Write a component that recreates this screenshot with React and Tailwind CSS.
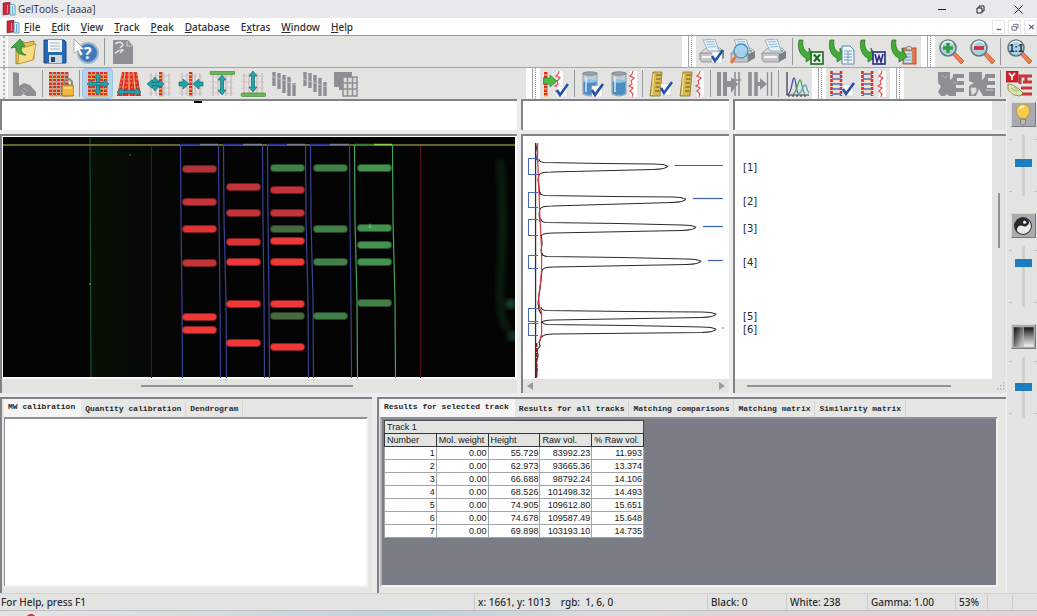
import React from "react";

const RED = "#e22b2b";
const TEAL = "#22a5a8";
const GRAY = "#8d8f94";

/* ---------- shared icon parts ---------- */

function Svg({ children, size = 26 }) {
  return (
    <svg width={size} height={size} viewBox="0 0 26 26" aria-hidden="true">
      {children}
    </svg>
  );
}

function Lattice({ x = 3, y = 1, cols = 5, rows = 7, step = 4 }) {
  const cells = [];
  for (let c = 0; c < cols; c++) {
    cells.push(
      <rect key={"g" + c} x={x + c * step + 3} y={y} width="1" height={rows * 3.5} fill="#b8a79c" />
    );
    for (let r = 0; r < rows; r++) {
      cells.push(
        <rect key={c + "-" + r} x={x + c * step} y={y + r * 3.5} width="3" height="2.5" fill={RED} />,
        <rect key={c + "y" + r} x={x + c * step} y={y + r * 3.5 + 2.5} width="3" height="1" fill="#f3b03c" />
      );
    }
  }
  return <g>{cells}</g>;
}

function FadedLanes() {
  return (
    <g>
      <path d="M4 2v23M9 2v23M17 2v23M22 2v23" stroke="#b3b4b8" strokeWidth="1" />
      <path d="M1 5h23M1 11h23M1 17h23M1 22h23" stroke="#eeb4b6" strokeWidth=".8" />
    </g>
  );
}

function Check({ x = 12, y = 12 }) {
  return (
    <g>
      <rect x={x + 1} y={y + 2} width="10" height="11" fill="#fff" stroke="#c9ccd2" strokeWidth=".7" />
      <path d={`M${x + 1} ${y + 6}l3 5 8-11`} stroke="#2450a8" strokeWidth="2.6" fill="none" />
    </g>
  );
}

function RedTrace({ x = 19 }) {
  return (
    <g>
      <rect x={x} y="0" width="7" height="26" fill="#fff" />
      <path
        d={`M${x + 3} 0l-1 3-2 2 4 2-3 3 1 3-3 2 4 2-3 3 3 3-1 3`}
        stroke="#e84a50"
        strokeWidth="1.2"
        fill="none"
      />
    </g>
  );
}

function Printer({ children }) {
  return (
    <Svg>
      <path d="M1 14l6-5h14l4 4-7 5H2z" fill="#d9dbdc" stroke="#8b8f94" strokeWidth=".7" />
      <path d="M4 1l12-1 4 12H9z" fill="#e6f0f8" stroke="#8aa2b8" strokeWidth=".8" />
      <path d="M7 3l8-.5M8 5.500l8-.5M9 8l8-.5" stroke="#86b4d8" strokeWidth=".9" />
      <path d="M1 14h17v9H3l-2-2z" fill="#c4c6c9" stroke="#7b7f84" strokeWidth=".7" />
      <path d="M18 15l7-3v7l-7 4z" fill="#7d8186" />
      <path d="M3 18h13" stroke="#f6f6f6" strokeWidth="2" />
      <circle cx="21" cy="12" r="1" fill="#4bb94b" />
      {children}
    </Svg>
  );
}

function GreenArrow() {
  return (
    <path
      d="M1 1h4c-1 7 1 11 6 13V9l5 9-8 5v-4C2 17-1 9 1 1z"
      fill="#43ab38"
      stroke="#23711f"
      strokeWidth=".7"
    />
  );
}

function Lens({ children }) {
  return (
    <Svg>
      <path d="M14 15l3-2 9 9-3 3z" fill="#f08050" stroke="#b1502b" strokeWidth=".7" />
      <circle cx="10" cy="9" r="8" fill="#a9d3df" stroke="#66777f" strokeWidth="1.6" />
      <path d="M4 8a6 6 0 0 1 11-3" stroke="#e3f5f8" strokeWidth="1.6" fill="none" />
      {children}
    </Svg>
  );
}

function ArrowH({ y = 13, x1 = 1, x2 = 25 }) {
  return (
    <path
      d={`M${x1} ${y}l5-4v2.500H${x2 - 5}V${y - 4}l5 4-5 4v-2.500H${x1 + 5}v2.500z`}
      fill={TEAL}
      stroke="#126c72"
      strokeWidth=".7"
    />
  );
}

function ArrowV({ y1 = 2, y2 = 24, x = 13 }) {
  return (
    <path
      d={`M${x} ${y1}l4 5h-2.500V${y2 - 5}h2.500l-4 5-4-5h2.500V${y1 + 5}h-2.500z`}
      fill={TEAL}
      stroke="#126c72"
      strokeWidth=".7"
    />
  );
}

function Beaker() {
  return (
    <g>
      <path d="M3 2h14v21q-7 4-14 0z" fill="#c3ccd3" stroke="#8a959f" strokeWidth=".9" />
      <path d="M3.500 10h13v12.500q-6.500 3-13 0z" fill="#4c8ec4" />
      <ellipse cx="10" cy="10" rx="6.500" ry="1.800" fill="#8fc3e4" />
      <ellipse cx="10" cy="2.500" rx="7" ry="1.800" fill="#97a2aa" stroke="#66727d" strokeWidth=".6" />
      <path d="M6 6v15" stroke="#e9f5fc" strokeWidth="1.300" />
    </g>
  );
}

function GoldRuler() {
  return (
    <g>
      <path d="M4 1h9l-2 24H1z" fill="#d8ba55" stroke="#8a6d19" strokeWidth=".8" />
      <path d="M7 4h5M7 8h4.500M6.500 12h4.500M6.500 16h4.500M6 20h4.500" stroke="#6d5312" strokeWidth="1.100" />
      <path d="M4.500 3L3 24" stroke="#f4e192" strokeWidth="1.200" />
    </g>
  );
}

function BlueLadder() {
  return (
    <g>
      <rect x="1" y="0" width="12" height="25" fill="#f6dccb" />
      <path d="M2.500 0v25M12 0v25" stroke={RED} strokeWidth="2.600" strokeDasharray="3 1" />
      <path d="M3 3h9M3 8h9M3 13h9M3 18h9M3 23h9" stroke="#4573b8" strokeWidth="1.600" />
    </g>
  );
}

/* ---------- toolbar icons ---------- */

const icons = {
  app: (
    <svg width="14" height="14" viewBox="0 0 14 14" aria-hidden="true">
      <path d="M1 1l7-1v12l-7 1z" fill="#c9283c" stroke="#7d2230" strokeWidth=".6" />
      <path d="M5.500 3v8" stroke="#ef8f98" strokeWidth="1" />
      <path d="M8 2l5 1v10H8z" fill="#e8f4fa" stroke="#4f97bd" strokeWidth=".9" />
      <path d="M10.500 4v8" stroke="#67b4d8" strokeWidth="1.400" />
    </svg>
  ),
  open: (
    <Svg>
      <path d="M5 6l6-4 3 2 9-2v18L5 25z" fill="#e5c35a" stroke="#9f7d22" strokeWidth=".9" />
      <path d="M8 10l17-5-3 16-15 4z" fill="#f6dd7f" stroke="#ae8b2e" strokeWidth=".8" />
      <path d="M0 9L9 0l5 7-4 1c0 5 2 7 5 8-7 0-10-3-10-8z" fill="#45a847" stroke="#257a2b" strokeWidth=".8" />
    </Svg>
  ),
  save: (
    <Svg>
      <path d="M2 1h20l2 2v21H2z" fill="#2869b4" stroke="#174681" strokeWidth="1" />
      <rect x="6" y="1" width="14" height="12" fill="#f1f5f9" />
      <path d="M8 4h10M8 7h10M8 10h10" stroke="#a9b7c7" strokeWidth="1" />
      <rect x="7" y="16" width="13" height="8" fill="#cfd7df" />
      <rect x="9" y="18" width="4" height="5" fill="#2d4564" />
    </Svg>
  ),
  help: (
    <Svg>
      <circle cx="15" cy="14" r="10" fill="#3c79bd" stroke="#9fb6cb" strokeWidth="2" />
      <text x="11" y="20" fontSize="16" fontWeight="700" fill="#fff" className="font-['Open_Sans']">
        ?
      </text>
      <path d="M1 0l10 10-4 .5 3 5-3 1-2-5-4 3z" fill="#fff" stroke="#8c97a2" strokeWidth=".7" />
    </Svg>
  ),
  report: (
    <Svg>
      <path d="M3 1h15l5 6v18H3z" fill={GRAY} />
      <path d="M17 2v5h5" stroke="#d6d7d9" fill="none" />
      <path d="M5 5c4-3 7-2 8 1l-3 3M5 14c3-1 4-4 8-3l-3 3" stroke="#e6e7e8" strokeWidth="1.400" fill="none" />
    </Svg>
  ),
  grayShape: (
    <Svg>
      <path d="M2 1l6 1v13l5-3 6 2 6 7v4h-9l-4-2-2 2H2z" fill={GRAY} />
      <path d="M12 17l5 3M10 20l4 2" stroke="#b9babd" strokeWidth=".8" />
    </Svg>
  ),
  lock: (
    <Svg>
      <Lattice x={1} />
      <path d="M16 15v-3a4 4 0 0 1 8 0v3" stroke="#8c8c84" strokeWidth="2" fill="none" />
      <rect x="14" y="14" width="12" height="11" rx="1.500" fill="#eeb83c" stroke="#9f741c" />
      <path d="M16 17h8" stroke="#fbe59b" strokeWidth="1.500" />
    </Svg>
  ),
  move: (
    <Svg>
      <Lattice x={3} />
      <ArrowV y1={2} y2={24} />
      <ArrowH x1={2} x2={24} />
    </Svg>
  ),
  widen: (
    <Svg>
      <path d="M6 1h15l4 24H1z" fill={RED} />
      <path d="M9 1L6 25M13 1v24M17 1l3 24" stroke="#f0d2ad" strokeWidth="1" />
      <path d="M5 4h17M5 8h18M4 12h18M3 16h20" stroke="#f0a637" strokeWidth="1" strokeDasharray="2 1" />
      <ArrowH y={21} />
    </Svg>
  ),
  moveTrack: (
    <Svg>
      <FadedLanes />
      <Lattice x={12} cols={1} />
      <ArrowV x={8} y1={6} y2={20} />
      <ArrowH x1={0} x2={17} />
    </Svg>
  ),
  narrowTrack: (
    <Svg>
      <FadedLanes />
      <Lattice x={11} cols={1} />
      <path d="M1 11h4V8l6 5-6 5v-3H1zM25 11h-4V8l-6 5 6 5v-3h4z" fill={TEAL} stroke="#126c72" strokeWidth=".7" />
    </Svg>
  ),
  topEdge: (
    <Svg>
      <FadedLanes />
      <rect x="1" y="0" width="25" height="3.500" rx="1.500" fill="#66b852" stroke="#3c8431" strokeWidth=".6" />
      <ArrowV y1={4} y2={24} />
    </Svg>
  ),
  bottomEdge: (
    <Svg>
      <FadedLanes />
      <ArrowV y1={0} y2={21} />
      <rect x="1" y="22" width="25" height="3.500" rx="1.500" fill="#66b852" stroke="#3c8431" strokeWidth=".6" />
    </Svg>
  ),
  tracksA: (
    <Svg>
      <path d="M3 1v14M8 2v16M13 4v18M18 6v19M23 12v13" stroke={GRAY} strokeWidth="3.400" />
      <path d="M1 5l24 9" stroke="#c5c6c9" strokeWidth=".8" />
    </Svg>
  ),
  tracksB: (
    <Svg>
      <path d="M3 1v14M8 2v15M13 4v17M18 7v18M23 11v14" stroke={GRAY} strokeWidth="3.400" />
      <path d="M1 8l24 8" stroke="#c5c6c9" strokeWidth=".8" />
    </Svg>
  ),
  grid: (
    <Svg>
      <path d="M1 1h18v5h-7v13H6v-3H1z" fill={GRAY} />
      <rect x="10" y="6" width="14" height="19" fill="#deded9" stroke={GRAY} strokeWidth="1.500" />
      <path d="M14.500 6v19M19.500 6v19M10 12h14M10 18h14" stroke={GRAY} strokeWidth="1.500" />
    </Svg>
  ),
  printCheck: (
    <Printer>
      <Check x={12} y={11} />
    </Printer>
  ),
  preview: (
    <Printer>
      <circle cx="11" cy="12" r="7" fill="#9fd3ec" fillOpacity=".85" stroke="#4c8fb6" strokeWidth="1.300" />
      <path d="M6 17l-5 7" stroke="#e57544" strokeWidth="3" />
    </Printer>
  ),
  print: <Printer />,
  excel: (
    <Svg>
      <GreenArrow />
      <rect x="13" y="13" width="12" height="12" fill="#e4f1df" stroke="#1c6a2a" strokeWidth="1.600" />
      <path d="M16 15.500l6 7M22 15.500l-6 7" stroke="#1c6a2a" strokeWidth="2" />
    </Svg>
  ),
  sheet: (
    <Svg>
      <GreenArrow />
      <path d="M13 7h8l4 4v14H13z" fill="#f1f7fc" stroke="#5d83ae" strokeWidth="1" />
      <path d="M15 12h8M15 15h8M15 18h8M15 21h8M19 12v12" stroke="#6592c4" strokeWidth=".9" />
    </Svg>
  ),
  word: (
    <Svg>
      <GreenArrow />
      <rect x="13" y="13" width="12" height="12" fill="#e5e6f6" stroke="#2b2b82" strokeWidth="1.600" />
      <path d="M15 15l2 8 2-6 2 6 2-8" stroke="#2b2b82" strokeWidth="1.600" fill="none" />
    </Svg>
  ),
  clipboard: (
    <Svg>
      <rect x="12" y="9" width="13" height="16" fill="#ea7746" stroke="#ad4f2b" strokeWidth=".9" />
      <rect x="13" y="12" width="8" height="12" fill="#d5e2ee" stroke="#8094a6" strokeWidth=".6" />
      <path d="M14 15h6M14 18h6M14 21h6" stroke="#7a9bbe" />
      <path d="M15 11q0-4 3-4t3 4z" fill="#d5d7da" stroke="#6e7175" strokeWidth=".8" />
      <GreenArrow />
    </Svg>
  ),
  zoomIn: (
    <Lens>
      <path d="M10 4v10M5 9h10" stroke="#329f3c" strokeWidth="3.400" />
    </Lens>
  ),
  zoomOut: (
    <Lens>
      <path d="M5 9h10" stroke="#d22f3f" strokeWidth="3.800" />
    </Lens>
  ),
  zoomOne: (
    <Lens>
      <text x="3" y="13" fontSize="10" fontWeight="700" fill="#142f3d" className="font-['Liberation_Sans']">
        1:1
      </text>
    </Lens>
  ),
  detect: (
    <Svg>
      <Lattice x={1} cols={1} />
      <RedTrace x={13} />
      <path d="M0 7h7V4l7 6-7 6v-3H0z" fill="#4fbd45" stroke="#2a7f28" strokeWidth=".7" />
      <Check x={13} y={13} />
    </Svg>
  ),
  beakerCheck: (
    <Svg>
      <Beaker />
      <Check x={11} y={13} />
    </Svg>
  ),
  beakerTrace: (
    <Svg>
      <g transform="translate(-2 0)">
        <Beaker />
      </g>
      <RedTrace />
    </Svg>
  ),
  rulerCheck: (
    <Svg>
      <g transform="translate(1 0)">
        <GoldRuler />
      </g>
      <Check x={12} y={11} />
    </Svg>
  ),
  rulerTrace: (
    <Svg>
      <GoldRuler />
      <RedTrace x={18} />
    </Svg>
  ),
  matchA: (
    <Svg>
      <path d="M3 1v24M9 1v24" stroke={GRAY} strokeWidth="4" />
      <path d="M10 10h5V6l7 7-7 9v-6h-5z" fill={GRAY} />
      <path d="M19 1v24M23 1v24M16 9h9" stroke={GRAY} strokeWidth="1.600" fill="none" />
    </Svg>
  ),
  matchB: (
    <Svg>
      <path d="M3 1v24M9 1v24" stroke={GRAY} strokeWidth="3.600" />
      <path d="M9 11h4V7l7 6-7 6v-4H9z" fill={GRAY} />
      <path d="M20.500 1v24M24.500 1v24" stroke={GRAY} strokeWidth="1.300" />
    </Svg>
  ),
  chart: (
    <Svg>
      <path d="M3 1v23h22" stroke="#33373e" strokeWidth="1.200" fill="none" />
      <path d="M4 23c4-1 4-16 6-16s2 16 5 16" stroke="#454fb0" strokeWidth="1.300" fill="none" />
      <path d="M9 23c4-1 5-14 7-14s2 12 5 14" stroke="#4c9f50" strokeWidth="1.300" fill="none" />
      <path d="M14 23c5-1 4-9 7-9 2 0 2 7 4 8" stroke="#53a8bd" strokeWidth="1.300" fill="none" />
      <path d="M5 24v2M9 24v2M13 24v2M17 24v2M21 24v2" stroke="#33373e" />
    </Svg>
  ),
  ladderCheck: (
    <Svg>
      <BlueLadder />
      <Check x={13} y={12} />
    </Svg>
  ),
  ladderTrace: (
    <Svg>
      <BlueLadder />
      <RedTrace />
    </Svg>
  ),
  treeA: (
    <Svg>
      <path d="M0 1h12v8l3-3V3h11v4h-7v3h7v4h-8v3h8v4h-8v4h-7l-2-2-2 2H3l-3-4 3-6-3-3z" fill={GRAY} />
      <path d="M4 4l3 3 3-3M16 12h4" stroke="#b4b5b9" strokeWidth=".9" fill="none" />
    </Svg>
  ),
  treeB: (
    <Svg>
      <path d="M0 1h13v8l3-3V3h10v4h-7v3h7v4h-8v3h8v8H14l-4-7-3 7H0V15l5-3-5-2z" fill={GRAY} />
      <path d="M2 17h5v4l-4 3zM17 19h7" fill="#e3e3e3" stroke="#d3d4d6" strokeWidth=".9" />
    </Svg>
  ),
  treeRed: (
    <Svg>
      <path d="M14 13V5h12M17 11h9M15 17h11M13 23h13M20 5v6" stroke="#c9333b" strokeWidth="3" fill="none" />
      <rect x="0" y="0" width="12" height="11" fill="#d5222f" stroke="#86141f" strokeWidth=".7" />
      <path d="M3 2l3 3.500L9 2M6 5.500V9" stroke="#fff" strokeWidth="1.600" fill="none" />
      <path d="M2 13l5 1 6 4 4 4-3 3-6-1-6-5z" fill="#dce5ae" stroke="#798353" strokeWidth=".8" />
      <path d="M5 17l6 4M8 16l5 4" stroke="#8a965c" strokeWidth=".7" />
    </Svg>
  ),
  bulb: (
    <Svg size={22}>
      <path d="M9 17c0-3-4-4-4-9a8 8 0 0 1 16 0c0 5-4 6-4 9z" fill="#f7cc50" stroke="#b78c2a" strokeWidth=".9" />
      <path d="M9 6a4 4 0 0 1 5-3" stroke="#fff5c8" strokeWidth="2" fill="none" />
      <path d="M10 18h6v5l-3 2-3-2z" fill="#b9bcc2" stroke="#6d6f74" strokeWidth=".8" />
    </Svg>
  ),
  yin: (
    <Svg size={22}>
      <circle cx="13" cy="13" r="10" fill="#e9e9e9" stroke="#333" strokeWidth="1.200" />
      <path d="M13 3a10 10 0 0 0 0 20a5 5 0 0 1 0-10a5 5 0 0 0 0-10z" fill="#2a2a2a" transform="rotate(25 13 13)" />
      <circle cx="15" cy="8.500" r="1.800" fill="#e9e9e9" />
      <circle cx="11" cy="17.500" r="1.800" fill="#e9e9e9" />
      <circle cx="15" cy="8.500" r="1.600" fill="#e9e9e9" />
    </Svg>
  ),
  gamma: (
    <Svg size={24}>
      <defs>
        <linearGradient id="gammaA" x1="0" x2="1" y1="0" y2="1">
          <stop offset="0" stopColor="#0c0c0c" />
          <stop offset="1" stopColor="#dcdcdc" />
        </linearGradient>
        <linearGradient id="gammaB" x1="0" x2="0" y1="0" y2="1">
          <stop offset="0" stopColor="#151515" />
          <stop offset=".5" stopColor="#8c8c90" />
          <stop offset="1" stopColor="#f4f4f4" />
        </linearGradient>
      </defs>
      <rect x="2" y="2" width="11" height="22" fill="url(#gammaA)" />
      <rect x="13.500" y="2" width="11" height="22" fill="url(#gammaB)" />
    </Svg>
  ),
};

/* ---------- toolbar parts ---------- */

function Tool({ icon, label, active }) {
  return (
    <button
      type="button"
      aria-label={label}
      aria-pressed={active ? true : undefined}
      className={
        active
          ? "flex h-[31px] w-[31px] shrink-0 items-center justify-center rounded-sm border border-[#9cc4e4] bg-[#b5d3ec]"
          : "flex h-[31px] w-[31px] shrink-0 items-center justify-center"
      }
    >
      {icons[icon]}
    </button>
  );
}

function Sep() {
  return (
    <div className="flex h-[31px] w-1.5 shrink-0 justify-center py-0.5">
      <div className="w-px bg-[#96989c]" />
    </div>
  );
}

function Grip() {
  return (
    <div className="flex h-[31px] w-3.5 shrink-0 bg-white pl-1.5">
      <div className="w-px bg-[#a6a8ab]" />
      <div className="ml-0.5 border-l border-dotted border-[#96989c]" />
    </div>
  );
}

function LeadGrip() {
  return (
    <div className="flex h-[31px] w-2 shrink-0 justify-center border-r border-white bg-[#f1f1f1]">
      <div className="border-l-2 border-dotted border-[#b1b3b6]" />
    </div>
  );
}

function renderTools(items) {
  return items.map((item, i) => {
    if (item === "|") return <Sep key={i} />;
    if (item === "grip") return <Grip key={i} />;
    if (item === "gap") return <div key={i} className="w-0.5 shrink-0" />;
    if (item === "space") return <div key={i} className="w-[31px] shrink-0" />;
    return <Tool key={i} icon={item[0]} label={item[1]} active={item[2]} />;
  });
}

const fileTools = [["open", "Open"], ["save", "Save"], ["help", "Context help"], "|", ["report", "Report"]];
const outputTools = [
  "grip", ["printCheck", "Print setup"], ["preview", "Print preview"], ["print", "Print"], "|",
  ["excel", "Export to Excel"], ["sheet", "Export table"], ["word", "Export to Word"], ["clipboard", "Copy to clipboard"],
  "gap", "grip", ["zoomIn", "Zoom in"], ["zoomOut", "Zoom out"], "|", ["zoomOne", "Actual size"],
];
const trackTools = [
  ["grayShape", "Edit gel"], "|", ["lock", "Lock tracks"], "|", ["move", "Move tracks", true], ["widen", "Resize tracks"],
  ["moveTrack", "Move track"], ["narrowTrack", "Track width"], ["topEdge", "Top edge"], ["bottomEdge", "Bottom edge"],
  ["tracksA", "Align tracks"], ["tracksB", "Bend tracks"], ["grid", "Track grid"],
];
const peakTools = [
  "grip", ["detect", "Detect peaks"], "|", ["beakerCheck", "Calibrate quantity"], ["beakerTrace", "Quantity standards"], "|",
  ["rulerCheck", "Calibrate weight"], ["rulerTrace", "Weight standards"], "|", ["matchA", "Match peaks"], ["matchB", "Transfer peaks"], "|",
  ["chart", "Profiles"], "grip", ["ladderCheck", "Match lanes"], ["ladderTrace", "Lane profile"], "gap", "grip", "space",
  ["treeA", "Tree"], ["treeB", "Subtree"], "|", ["treeRed", "Dendrogram"],
];

/* ---------- gel image ---------- */

const lanes = [
  { x: 182, l: [180, 182], r: [218, 220], bands: [[169, "m"], [202, "n"], [229, "r"], [263, "n"], [317, "R"], [330, "R"]] },
  { x: 226, l: [223, 226], r: [262, 264], bands: [[187, "n"], [213, "n"], [242, "r"], [262, "R"], [304, "R"], [343, "R"]] },
  { x: 270, l: [267, 269], r: [305, 308], bands: [[168, "g"], [190, "n"], [213, "n"], [229, "o"], [241, "R"], [262, "R"], [304, "R"], [316, "o"], [347, "R"]] },
  { x: 313, l: [310, 313], r: [349, 351], bands: [[168, "g"], [229, "g"], [262, "g"], [316, "g"]] },
  { x: 357, l: [354, 357], r: [392, 395], bands: [[168, "G"], [228, "G"], [245, "G"], [262, "G"], [303, "g"]] },
];
const bandFill = { m: "#b23438", n: "#c43338", r: "#de3235", R: "#f03838", g: "#427f49", G: "#43924e", o: "#48693e" };

function GelImage() {
  return (
    <svg className="block h-full w-full" viewBox="3 137 512 241" preserveAspectRatio="none" role="img" aria-label="Gel image">
      <defs>
        <filter id="soft" x="-50%" y="-20%" width="200%" height="140%" colorInterpolationFilters="sRGB">
          <feGaussianBlur stdDeviation="3" />
        </filter>
        <linearGradient id="haze">
          <stop offset="0" stopColor="#071004" />
          <stop offset="1" stopColor="#040504" />
        </linearGradient>
      </defs>
      <rect x="3" y="137" width="512" height="240" fill="#030403" />
      <rect x="3" y="377" width="512" height="1" fill="#fff" />
      <rect x="91" y="137" width="90" height="240" fill="url(#haze)" />
      <path d="M500 160q5 60 1 110t8 60" stroke="#14361a" strokeWidth="4" fill="none" filter="url(#soft)" />
      <circle cx="511" cy="304" r="4" fill="#2f7a48" filter="url(#soft)" />
      <circle cx="513" cy="336" r="4" fill="#256238" filter="url(#soft)" />
      <path d="M90 137v6l.5 120 .5 114" stroke="#235a2d" strokeWidth="1" fill="none" />
      <circle cx="90" cy="284" r="1" fill="#3ba660" />
      <circle cx="130" cy="155" r="1.200" fill="#184b1a" />
      <path d="M151.500 146v232M420.500 146v232" stroke="#551018" strokeWidth="1" />
      <path d="M3 145h512" stroke="#86853b" strokeWidth="1.500" />
      {lanes.map((lane, i) => {
        const green = i === 4;
        const stroke = green ? "#4aa458" : "#3a4394";
        return (
          <g key={lane.x}>
            <path d={`M${lane.l[0]} 144.500h20`} stroke={green ? "#2e7d33" : "#262f8c"} strokeWidth="1.500" />
            <path d={`M${lane.l[0] + 20} 144.500H${lane.r[0]}`} stroke={green ? "#87d743" : "#77798d"} strokeWidth="1.500" />
            {[lane.l, lane.r].map(([top, bottom]) => (
              <path
                key={top}
                d={`M${top + 0.5} 145L${top + 1} 220L${bottom} 300L${bottom + 0.5} 378`}
                stroke={stroke}
                strokeWidth="1.200"
                fill="none"
              />
            ))}
            {lane.bands.map(([y, tone], b) => (
              <g key={b}>
                <rect x={lane.x} y={y - 4} width="35" height="8" rx="4" fill={bandFill[tone]} fillOpacity=".55" />
                <rect x={lane.x + 1} y={y - 3} width="33" height="6" rx="3" fill={bandFill[tone]} />
              </g>
            ))}
          </g>
        );
      })}
      <path d="M370 223l1.500 5h-3z" fill="#4ec962" />
    </svg>
  );
}

/* ---------- densitometry profile ---------- */

const peaks = [
  { top: 162, bottom: 172, x: 667, y: 166, box: [158, 16], base: 539 },
  { top: 195, bottom: 206, x: 685, y: 199, box: [192, 15], base: 540 },
  { top: 222, bottom: 233, x: 695, y: 227, box: [219, 16], base: 541 },
  { top: 256, bottom: 267, x: 700, y: 261, box: [255, 13], base: 542 },
  { top: 310, bottom: 320, x: 715, y: 314, box: [308, 13], base: 541 },
  { top: 324, bottom: 334, x: 715, y: 329, box: [323, 12], base: 542 },
];

function Profile() {
  return (
    <svg className="block h-full w-full" viewBox="523 136 205 243" preserveAspectRatio="none" role="img" aria-label="Track profile">
      <path d="M535.500 143V378" stroke="#2c2f3a" strokeWidth="1.300" />
      <path
        d="M537.500 143l-1 5 1 5-1 6 2 3M539 174l-1 6 1 8 1 7M540 208l-1 6 1 8M541 235l1 8-1 8 1 5M542 269l-1 10-1 9-1 7-1 8 1 7 2 4M542 335l-3 7 1 4-3 4 1 6-2 6 1 8-1 8"
        stroke="#47242c"
        strokeWidth="1.200"
        fill="none"
      />
      <path
        d="M537.500 143v17l1 20 1 30 2 40v20l-1 12-2 16 1 10 2 4v22l-2 8"
        stroke="#e33640"
        strokeWidth="1.200"
        fill="none"
      />
      <path d="M536.500 343v35" stroke="#7a2028" strokeWidth="1.800" strokeDasharray="4 1" />
      {peaks.map((p, i) => (
        <g key={p.y} fill="none">
          <path
            d={`M${p.base} ${p.top - 3}q0 3 5 3.500L${(p.x + p.base) / 2} ${p.top + 1.5}L${p.x - 14} ${p.y - 2}l9 .5l5 1.500q-1 3-14 3.500L${p.base + 12} ${p.bottom}q-11 0-12 3`}
            stroke="#2c2c2c"
            strokeWidth="1"
          />
          <path d={`M538 ${p.box[0] + 0.5}H528.500v${p.box[1]}H538`} stroke="#4468bb" strokeWidth="1" />
          {i < 4 && <path d={`M${p.x + 7} ${p.y - 0.5}H722`} stroke="#3c61b8" strokeWidth="1.200" />}
        </g>
      ))}
      <circle cx="722" cy="328" r=".8" fill="#444" />
    </svg>
  );
}

const peakLabels = [["[1]", 171], ["[2]", 205], ["[3]", 232], ["[4]", 266], ["[5]", 320], ["[6]", 333]];

/* ---------- results ---------- */

const columns = ["Number", "Mol. weight", "Height", "Raw vol.", "% Raw vol."];
const results = [
  ["1", "0.00", "55.729", "83992.23", "11.993"],
  ["2", "0.00", "62.973", "93665.36", "13.374"],
  ["3", "0.00", "66.688", "98792.24", "14.106"],
  ["4", "0.00", "68.526", "101498.32", "14.493"],
  ["5", "0.00", "74.905", "109612.80", "15.651"],
  ["6", "0.00", "74.678", "109587.49", "15.648"],
  ["7", "0.00", "69.898", "103193.10", "14.735"],
];

function Tabs({ label, items }) {
  return (
    <div role="tablist" aria-label={label} className="flex h-[18px] shrink-0 items-end font-['Liberation_Mono',monospace] text-[8px] font-bold text-[#26282c]">
      {items.map((text, i) => (
        <button
          key={text}
          type="button"
          role="tab"
          aria-selected={i === 0}
          className={
            i === 0
              ? "h-[18px] bg-[#f5f5f5] pr-1.5 pb-1 pl-1 whitespace-nowrap"
              : "h-4 border-r border-[#d3d4d4] px-1 whitespace-nowrap"
          }
        >
          {text}
        </button>
      ))}
    </div>
  );
}

function SideControl({ icon, label, value }) {
  return (
    <div className="flex flex-col items-center gap-2">
      <button
        type="button"
        aria-label={"Reset " + label}
        className="flex h-[25px] w-[25px] items-center justify-center border border-r-[#77797e] border-b-[#77797e] border-t-[#d8d8da] border-l-[#d8d8da] bg-[#a9abb0]"
      >
        {icons[icon]}
      </button>
      <div className="flex w-full justify-between">
        <Ticks />
        <input
          type="range"
          aria-label={label}
          min="0"
          max="100"
          defaultValue={value}
          className="m-0 h-[61px] w-[17px] appearance-none bg-transparent bg-[linear-gradient(#cfd0d0,#cfd0d0)] bg-[length:3px_100%] bg-center bg-no-repeat [writing-mode:vertical-lr] [&::-webkit-slider-runnable-track]:w-[17px] [&::-webkit-slider-thumb]:h-2 [&::-webkit-slider-thumb]:w-[17px] [&::-webkit-slider-thumb]:appearance-none [&::-webkit-slider-thumb]:bg-[#1f7cbd]"
        />
        <Ticks />
      </div>
    </div>
  );
}

function Ticks() {
  return (
    <div className="flex w-[3px] flex-col justify-between py-1">
      <div className="h-px bg-[#c2c3c3]" />
      <div className="h-px bg-[#c2c3c3]" />
    </div>
  );
}

const menus = [
  ["", "F", "ile"], ["", "E", "dit"], ["", "V", "iew"], ["", "T", "rack"], ["", "P", "eak"],
  ["", "D", "atabase"], ["E", "x", "tras"], ["", "W", "indow"], ["", "H", "elp"],
];

function Glyph({ d, size = 9 }) {
  return (
    <svg width={size} height={size} viewBox="0 0 9 9" fill="none" stroke="currentColor" aria-hidden="true">
      <path d={d} />
    </svg>
  );
}

const RESTORE = "M1 3h5v5H1zM3 3V1h5v5H6";
const pane = "border-t-2 border-l-2 border-[#808288]";

export default function App() {
  return (
    <div className="flex min-h-screen flex-col overflow-hidden bg-[#e3e4e2] font-['Noto_Sans','Open_Sans',sans-serif] text-[10px] leading-4 font-medium text-[#2c2e33]">
      <header className="flex h-[18px] items-center bg-[#e9e8ea] pl-0.5">
        {icons.app}
        <h1 className="ml-0.5 font-['Open_Sans','Noto_Sans',sans-serif] font-normal">GelTools - [aaaa]</h1>
        <div className="ml-auto flex text-[#222]">
          <button type="button" aria-label="Minimize" className="flex w-[38px] justify-center"><Glyph d="M0 4.500h8" /></button>
          <button type="button" aria-label="Restore" className="flex w-[38px] justify-center"><Glyph d={RESTORE} /></button>
          <button type="button" aria-label="Close" className="flex w-[38px] justify-center"><Glyph d="M.5 .5l8 8M8.500 .5l-8 8" /></button>
        </div>
      </header>

      <nav aria-label="Main menu" className="flex h-[17px] items-center bg-white pl-1.5">
        {icons.app}
        <div className="ml-1 flex gap-[11px]">
          {menus.map(([before, key, after]) => (
            <button key={key + after} type="button">
              {before}<span className="underline">{key}</span>{after}
            </button>
          ))}
        </div>
        <div className="ml-auto flex h-3.5 gap-[3px] text-[#5b6478]">
          <button type="button" aria-label="Minimize document" className="flex w-[13px] items-center justify-center border border-[#e6e7e8]"><Glyph d="M2 7h5M2 7.500h5" size={8} /></button>
          <button type="button" aria-label="Restore document" className="flex w-[13px] items-center justify-center border border-[#e6e7e8]"><Glyph d="M1 4h5v4H1zM3 3V1.500h5v4H6" size={8} /></button>
          <button type="button" aria-label="Close document" className="flex w-[13px] items-center justify-center border border-[#e6e7e8]"><Glyph d="M2 2l5 5M7 2L2 7M3 2l5 5M8 2L3 7" size={8} /></button>
        </div>
      </nav>

      <div className="flex h-8 border-t border-[#96989b]">
        <LeadGrip />
        {renderTools(fileTools)}
        <div className="flex-1" />
        <div className="flex pr-[3px]">{renderTools(outputTools)}</div>
      </div>
      <div className="flex h-8 border-t border-[#a3a5a8]">
        <LeadGrip />
        {renderTools(trackTools)}
        <div className="flex-1" />
        <div className="flex pr-[3px]">{renderTools(peakTools)}</div>
      </div>

      <main className="flex flex-1 items-stretch">
        <div className="flex min-w-0 flex-1 flex-col gap-1 bg-[#ececec]">
          <div className="grid grid-cols-[517fr_208fr_273fr] gap-x-1 gap-y-1">
            <div className={"flex h-[31px] justify-center bg-white pr-[124px] " + pane}>
              <div className="h-0.5 w-2 bg-black" />
            </div>
            <div className={"h-[31px] bg-white " + pane} />
            <div className={"flex h-[31px] bg-white " + pane}>
              <div className="ml-auto w-3.5 bg-[#e3e4e2]" />
            </div>

            <section aria-label="Gel" className={"flex h-[259px] flex-col bg-[#e3e4e2] " + pane}>
              <div className="h-[243px] bg-white pt-px pr-0.5 pb-px pl-px">
                <GelImage />
              </div>
              <div className="flex flex-1 items-center justify-center pr-[26px]">
                <div className="h-0.5 w-[212px] bg-[#909297]" />
              </div>
            </section>

            <section aria-label="Profile" className={"flex h-[259px] flex-col bg-[#e3e4e2] " + pane}>
              <div className="h-[243px] bg-white">
                <Profile />
              </div>
              <div className="flex flex-1 items-center justify-between px-1 text-[#9a9b9e]">
                <svg width="6" height="8" aria-hidden="true"><path d="M6 0v8L0 4z" fill="currentColor" /></svg>
                <svg width="6" height="8" aria-hidden="true"><path d="M0 0v8l6-4z" fill="currentColor" /></svg>
              </div>
            </section>

            <section aria-label="Peak labels" className={"flex h-[259px] flex-col bg-[#e3e4e2] " + pane}>
              <div className="flex h-[243px]">
                <div className="flex-1 bg-white">
                  <svg className="block h-full w-full font-['DejaVu_Sans',sans-serif] text-[10px]">
                    {peakLabels.map(([text, y]) => (
                      <text key={text} x="8" y={y - 136} fill="#26282c">{text}</text>
                    ))}
                  </svg>
                </div>
                <div className="flex w-3.5 justify-center pt-[57px]">
                  <div className="h-[55px] w-0.5 bg-[#909297]" />
                </div>
              </div>
              <div className="flex flex-1 items-center justify-between pl-3">
                <div className="h-0.5 w-[204px] bg-[#909297]" />
                <svg width="10" height="10" fill="#b4b5b7" aria-hidden="true">
                  <path d="M7 1h1.500v1.500H7zM4 4h1.500v1.500H4zM7 4h1.500v1.500H7zM1 7h1.500v1.500H1zM4 7h1.500v1.500H4zM7 7h1.500v1.500H7z" />
                </svg>
              </div>
            </section>
          </div>

          <div className="grid flex-1 grid-cols-[372fr_629fr] gap-[5px]">
            <section aria-label="Calibration" className={"flex flex-col bg-[#e6e7e5] pb-1.5 pr-1 pl-0.5 " + pane}>
              <Tabs label="Calibration views" items={["MW calibration", "Quantity calibration", "Dendrogram"]} />
              <div className="flex-1 border-t-2 border-r-2 border-b-2 border-l border-t-[#8e9095] border-r-[#f3f3f3] border-b-[#f3f3f3] border-l-[#8e9095] bg-white" />
            </section>

            <section aria-label="Results" className={"flex min-w-0 flex-col bg-[#e6e7e5] pb-1.5 pr-2 pl-px " + pane}>
              <Tabs
                label="Result views"
                items={["Results for selected track", "Results for all tracks", "Matching comparisons", "Matching matrix", "Similarity matrix"]}
              />
              <div className="flex-1 border-2 border-t-[#8e9095] border-r-[#f3f3f3] border-b-[#f3f3f3] border-l-[#b1b3b6] bg-[#7a7d85] pt-px pl-0.5">
                <table className="w-[260px] table-fixed border-collapse border border-[#33353a] bg-white font-['Liberation_Sans',Arial,sans-serif] text-[9px] leading-3 font-normal text-[#17181a]">
                  <caption className="border-x border-t border-[#4a4c50] bg-[#e3e4e2] px-0.5 text-left">Track 1</caption>
                  <thead>
                    <tr className="bg-[#e3e4e2]">
                      {columns.map((name) => (
                        <th key={name} scope="col" className="border border-[#33353a] px-0.5 py-0 text-left font-normal whitespace-nowrap">
                          {name}
                        </th>
                      ))}
                    </tr>
                  </thead>
                  <tbody>
                    {results.map((row) => (
                      <tr key={row[0]}>
                        {row.map((cell, i) => (
                          <td key={i} className="border border-[#a3a5a8] py-0 pr-px pl-0.5 text-right">{cell}</td>
                        ))}
                      </tr>
                    ))}
                  </tbody>
                </table>
              </div>
            </section>
          </div>
        </div>

        <aside aria-label="Display adjustments" className="flex w-[31px] shrink-0 flex-col gap-[17px] border-l border-[#f0f0f0] pt-[3px] pl-0.5">
          <SideControl icon="bulb" label="Brightness" value={45} />
          <SideControl icon="yin" label="Contrast" value={25} />
          <SideControl icon="gamma" label="Gamma" value={49} />
        </aside>
      </main>

      <footer>
        <div className="flex h-[17px] items-center border-t border-[#d2d3d2] [&>span]:border-l [&>span]:border-[#cbcccc] [&>span]:pl-[3px]">
          <p className="flex-1 pl-px">For Help, press F1</p>
          <span className="w-[233px] whitespace-pre">x: 1661, y: 1013    rgb:  1, 6, 0</span>
          <span className="w-[79px]">Black: 0</span>
          <span className="w-[81px]">White: 238</span>
          <span className="w-[88px]">Gamma: 1.00</span>
          <span className="w-8">53%</span>
          <span className="h-3.5 w-[25px]" />
          <span className="h-3.5 w-[25px]" />
        </div>
        <div className="h-1.5 overflow-hidden border-t border-[#bfc2c4] bg-[linear-gradient(90deg,#e3e4e4,#d5dde0_20%,#bcd2da_40%,#d9dcdd_58%,#e2d3d7_75%,#e4d4d8)] pl-[26px]">
          <div className="mt-[3px] h-2.5 w-2.5 rounded-full bg-[#c0394a]" />
        </div>
      </footer>
    </div>
  );
}
